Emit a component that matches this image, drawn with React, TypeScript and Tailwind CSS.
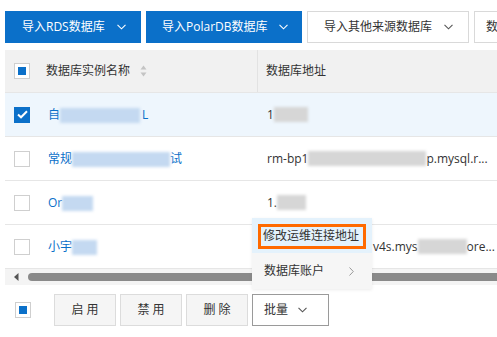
import React from "react";

const font = "font-['Open_Sans','Noto_Sans_CJK_SC',sans-serif]";

function Chevron({ color = "currentColor" }: { color?: string }) {
  return (
    <svg width="9" height="6" viewBox="0 0 9 6" fill="none">
      <path d="M0.5 0.8 L4.5 4.8 L8.5 0.8" stroke={color} strokeWidth="1.1" />
    </svg>
  );
}

function Check({ state }: { state: "none" | "checked" | "partial" }) {
  if (state === "checked") {
    return (
      <div className="w-4 h-4 bg-[#0b70c9] flex items-center justify-center">
        <svg width="11" height="9" viewBox="0 0 11 9" fill="none">
          <path d="M1 4.5 L4 7.3 L10 1.3" stroke="white" strokeWidth="2" />
        </svg>
      </div>
    );
  }
  return (
    <div className="w-4 h-4 bg-white border border-[#cfcfcf] flex items-center justify-center">
      {state === "partial" && <div className="w-2 h-2 bg-[#0b70c9]" />}
    </div>
  );
}

function Blur({ w, tone }: { w: number; tone: "blue" | "gray" }) {
  return (
    <span
      className={
        "inline-block h-[15px] align-middle blur-[1.5px] " +
        (tone === "blue" ? "bg-[#c4d9f1]" : "bg-[#d6d6d6]")
      }
      style={{ width: w }}
    />
  );
}

type Row = {
  name: React.ReactNode;
  addr: React.ReactNode;
  selected?: boolean;
};

const rows: Row[] = [
  {
    name: (
      <>
        自<Blur w={80} tone="blue" />
        <span className="ml-[2px]">L</span>
      </>
    ),
    addr: (
      <>
        1<Blur w={34} tone="gray" />
      </>
    ),
    selected: true,
  },
  {
    name: (
      <>
        常规<Blur w={98} tone="blue" />试
      </>
    ),
    addr: (
      <>
        rm-bp1<Blur w={118} tone="gray" />p.mysql.r...
      </>
    ),
  },
  {
    name: (
      <>
        Or<Blur w={31} tone="blue" />
      </>
    ),
    addr: (
      <>
        1.<Blur w={29} tone="gray" />
      </>
    ),
  },
  {
    name: (
      <>
        小宇<Blur w={25} tone="blue" />
      </>
    ),
    addr: (
      <>
        {/* this part sits under the open menu */}
        <span className="inline-block w-[106px]" />
        v4s.mys
        <Blur w={49} tone="gray" />
        ore...
      </>
    ),
  },
];

export default function App() {
  return (
    <div className={`relative w-[497px] h-[337px] overflow-hidden bg-white text-[12px] ${font}`}>
      <div className="pl-[5px] pt-[11px]">
        {/* top action buttons */}
        <div className="flex gap-[5px] h-8 whitespace-nowrap">
          <button className="w-[136px] shrink-0 bg-[#0b70c9] text-white flex items-center pl-[17px] gap-[12px]">
            <span>导入RDS数据库</span>
            <Chevron />
          </button>
          <button className="w-[156px] shrink-0 bg-[#0b70c9] text-white flex items-center pl-[16px] gap-[11px]">
            <span>导入PolarDB数据库</span>
            <Chevron />
          </button>
          <button className="w-[162px] shrink-0 bg-white border border-[#d9d9d9] text-[#333] flex items-center pl-[16px] gap-[12px]">
            <span>导入其他来源数据库</span>
            <Chevron color="#555" />
          </button>
          <button className="w-[60px] shrink-0 bg-white border border-[#d9d9d9] text-[#333] flex items-center pl-[11px]">
            <span>数据库</span>
          </button>
        </div>

        {/* table */}
        <div className="mt-[7px] text-[#333]">
          <div className="flex h-[43px] bg-[#f1f1f1] border-b border-[#e6e6e6]">
            <div className="w-[253px] flex items-center border-r border-[#e2e2e2]">
              <div className="pl-[9px] pr-4">
                <Check state="partial" />
              </div>
              <span>数据库实例名称</span>
              <svg className="ml-[10px]" width="7" height="12" viewBox="0 0 7 12">
                <path d="M3.5 0.5 L6.5 4.5 L0.5 4.5 Z" fill="#c4c4c4" />
                <path d="M3.5 11.5 L6.5 7.5 L0.5 7.5 Z" fill="#c4c4c4" />
              </svg>
            </div>
            <div className="flex-1 flex items-center pl-[8px]">数据库地址</div>
          </div>

          {rows.map((r, i) => (
            <div
              key={i}
              className={
                "flex h-[44px] border-b border-[#e6e6e6] " + (r.selected ? "bg-[#eef6fd]" : "bg-white")
              }
            >
              <div className="w-[253px] flex items-center">
                <div className="pl-[9px] pr-4">
                  <Check state={r.selected ? "checked" : "none"} />
                </div>
                <span className="ml-[2px] text-[#0b70c9] whitespace-nowrap">{r.name}</span>
              </div>
              <div className="flex-1 flex items-center pl-[9px] whitespace-nowrap overflow-hidden">
                {r.addr}
              </div>
            </div>
          ))}

          {/* horizontal scrollbar */}
          <div className="flex items-center h-4 bg-[#f4f4f4]">
            <svg className="ml-[9px]" width="5" height="8" viewBox="0 0 5 8">
              <path d="M4.5 0 L4.5 8 L0 4 Z" fill="#555" />
            </svg>
            <div className="ml-[9px] flex-1 h-2 rounded-l-full bg-[#8a8a8a]" />
          </div>
        </div>

        {/* bottom toolbar */}
        <div className="flex items-center mt-[9px] h-8">
          <div className="pl-[10px] pr-[23px]">
            <Check state="partial" />
          </div>
          <div className="flex gap-1 text-[#333]">
            <button className="w-[62px] h-8 bg-[#f5f5f5] border border-[#dcdcdc]">启 用</button>
            <button className="w-[62px] h-8 bg-[#f5f5f5] border border-[#dcdcdc]">禁 用</button>
            <button className="w-[62px] h-8 bg-[#f5f5f5] border border-[#dcdcdc]">删 除</button>
            <button className="w-[77px] h-8 bg-white border border-[#9a9a9a] flex items-center pl-[11px] gap-[10px]">
              <span>批量</span>
              <Chevron color="#555" />
            </button>
          </div>
        </div>
      </div>

      {/* dropdown menu */}
      <div className="absolute left-[252px] top-[218px] w-[120px] bg-[#f6f6f6] text-[#333] shadow-[0_1px_3px_rgba(0,0,0,0.08)]">
        <div className="relative h-[35px] bg-[#e4f2fc] flex items-center pl-[11px]">
          修改运维连接地址
          <div className="absolute left-[6px] top-[6px] w-[108px] h-[25px] border-[3px] border-[#ff6a00]" />
        </div>
        <div className="h-[36px] flex items-center pl-[12px] pr-[18px] justify-between">
          <span>数据库账户</span>
          <svg width="5" height="9" viewBox="0 0 5 9" fill="none">
            <path d="M0.5 0.5 L4.3 4.5 L0.5 8.5" stroke="#999" strokeWidth="1" />
          </svg>
        </div>
      </div>
    </div>
  );
}
